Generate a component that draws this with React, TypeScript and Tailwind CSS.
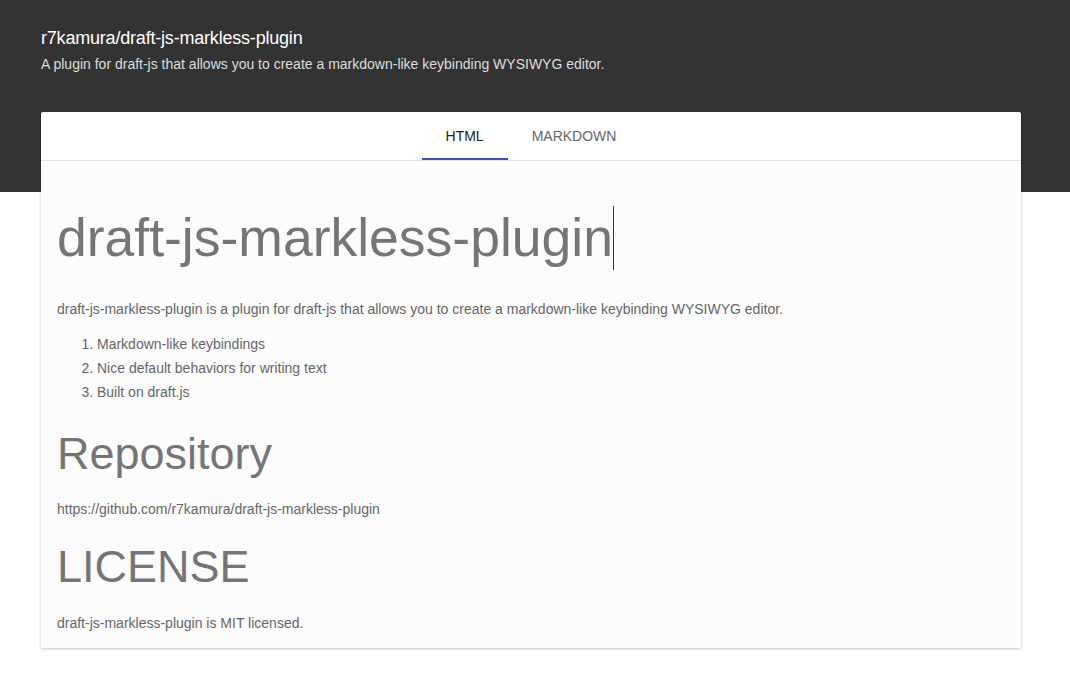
export default function App() {
  return (
    <div className="min-h-screen bg-white font-['Liberation_Sans',Arial,sans-serif]">
      {/* header */}
      <header className="h-[192px] bg-[#333333] px-[41px] pt-[27px]">
        <h1 className="text-[18px] leading-[22px] tracking-[-0.2px] text-white">
          r7kamura/draft-js-markless-plugin
        </h1>
        <p className="mt-[5px] text-[14px] leading-[20px] text-[#dddddd]">
          A plugin for draft-js that allows you to create a markdown-like keybinding WYSIWYG editor.
        </p>
      </header>

      {/* editor card */}
      <main className="-mt-[80px] ml-[41px] w-[980px] rounded-[2px] bg-white shadow-[0_1px_3px_rgba(0,0,0,0.25)]">
        <nav className="flex justify-center border-b border-[#e0e0e0]">
          <button className="h-[48px] border-b-2 border-[#3f51b5] px-6 pt-[2px] text-[14px] text-[#222222]">
            HTML
          </button>
          <button className="h-[48px] border-b-2 border-transparent px-6 pt-[2px] text-[14px] text-[#666666]">
            MARKDOWN
          </button>
        </nav>

        <div className="bg-[#fcfcfc] px-4 pb-[13px] pt-[45px]">
          <h1 className="text-[53.5px] leading-[64px] text-[#757575]">
            draft-js-markless-plugin
            <span className="inline-block h-[64px] w-px bg-[#333333] align-top" />
          </h1>
          <p className="mt-[27px] text-[14px] leading-[24px] text-[#666666]">
            draft-js-markless-plugin is a plugin for draft-js that allows you to create a markdown-like keybinding WYSIWYG editor.
          </p>
          <ol className="mt-[11px] list-decimal pl-[40px] text-[14px] leading-[24px] text-[#666666]">
            <li>Markdown-like keybindings</li>
            <li>Nice default behaviors for writing text</li>
            <li>Built on draft.js</li>
          </ol>
          <h2 className="mt-[23px] text-[45px] leading-[54px] text-[#757575]">Repository</h2>
          <p className="mt-[16px] text-[14px] leading-[24px] text-[#666666]">
            https://github.com/r7kamura/draft-js-markless-plugin
          </p>
          <h2 className="mt-[19px] text-[45px] leading-[54px] text-[#757575]">LICENSE</h2>
          <p className="mt-[17px] text-[14px] leading-[24px] text-[#666666]">
            draft-js-markless-plugin is MIT licensed.
          </p>
        </div>
      </main>
    </div>
  );
}
